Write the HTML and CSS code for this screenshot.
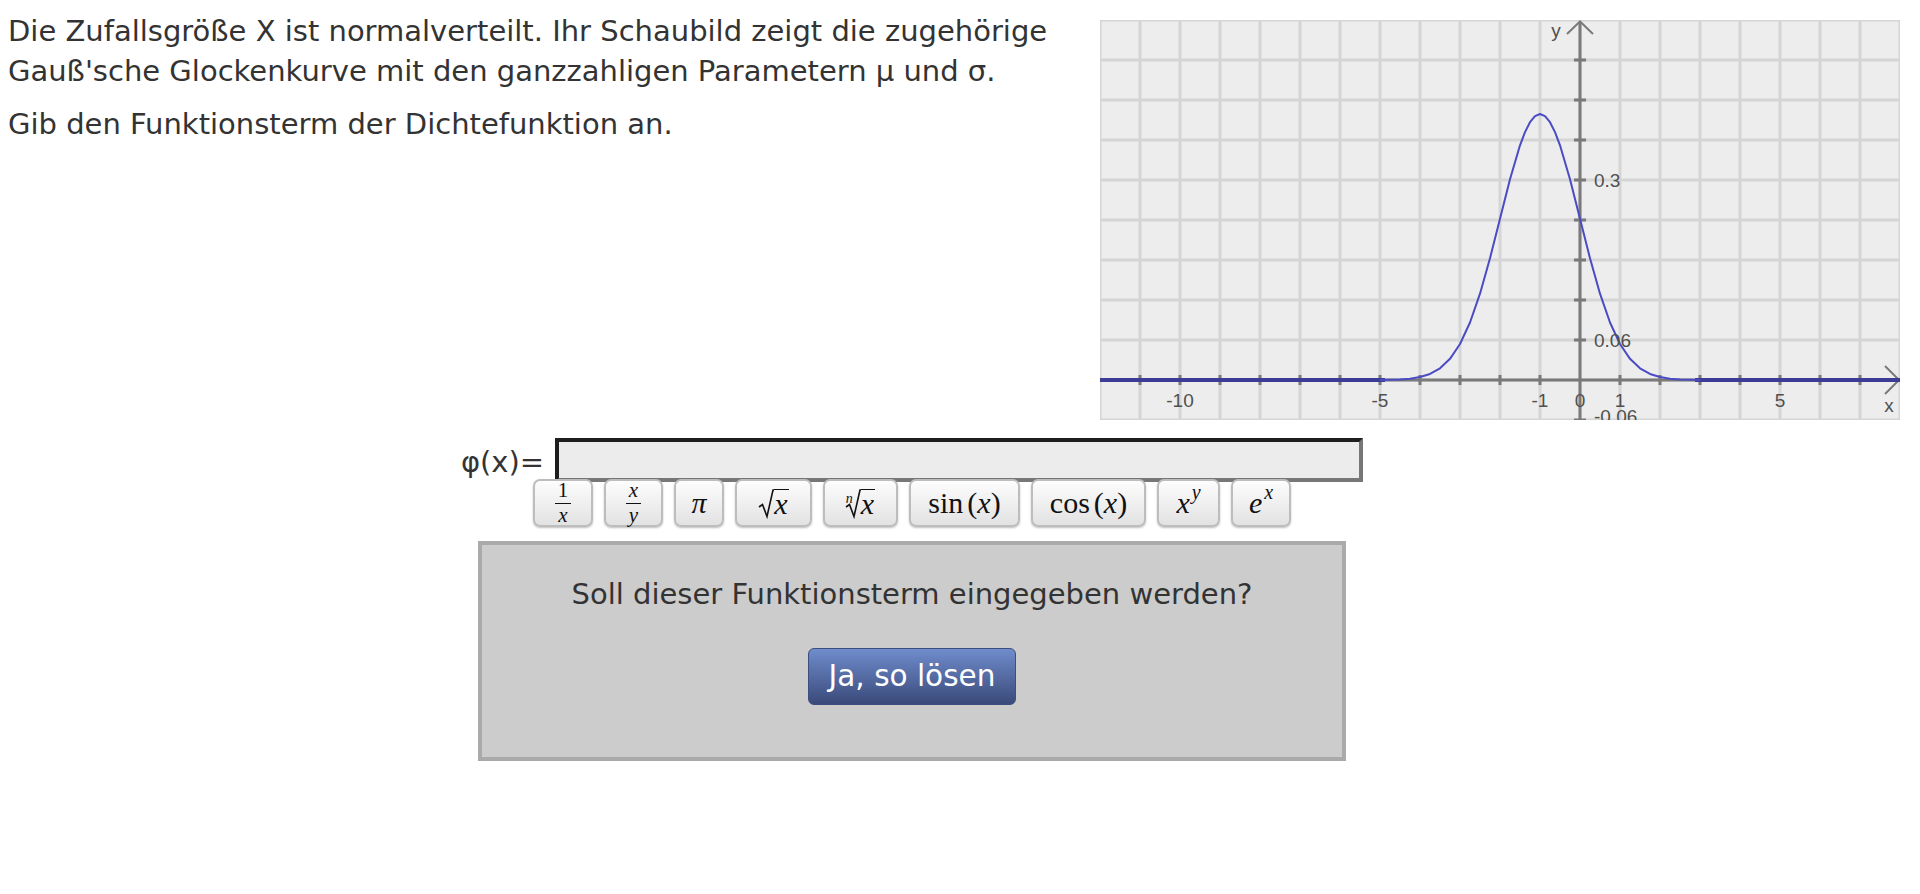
FILE: index.html
```html
<!DOCTYPE html>
<html lang="de">
<head>
<meta charset="utf-8">
<title>Normalverteilung</title>
<link rel="stylesheet" href="styles.css">
</head>
<body>
<div class="top">
  <div class="task">
    <p>Die Zufallsgröße X ist normalverteilt. Ihr Schaubild zeigt die zugehörige Gauß'sche Glockenkurve mit den ganzzahligen Parametern μ und σ.</p>
    <p>Gib den Funktionsterm der Dichtefunktion an.</p>
  </div>
  <div class="plot">
    <svg class="graph" width="800" height="400" viewBox="0 0 800 400">
      <defs>
        <pattern id="grid" x="-20" y="-20" width="40" height="40" patternUnits="userSpaceOnUse">
          <path d="M20 0V40M0 20H40" stroke="#d5d5d5" stroke-width="3" fill="none"/>
        </pattern>
      </defs>
      <rect width="800" height="400" fill="#ededed"/>
      <rect width="800" height="400" fill="url(#grid)"/>
      <path d="M0 360H800" stroke="#7a7a7a" stroke-width="3"/>
      <path d="M480 400V2" stroke="#7a7a7a" stroke-width="3"/>
      <path d="M40 355V365M80 355V365M120 355V365M160 355V365M200 355V365M240 355V365M280 355V365M320 355V365M360 355V365M400 355V365M440 355V365M520 355V365M560 355V365M600 355V365M640 355V365M680 355V365M720 355V365M760 355V365" stroke="#7a7a7a" stroke-width="3"/>
      <path d="M474 40H486M474 80H486M474 120H486M474 160H486M474 200H486M474 240H486M474 280H486M474 320H486M474 400H486" stroke="#7a7a7a" stroke-width="3"/>
      <path d="M467 14L480 1.5L493 14" stroke="#7a7a7a" stroke-width="2" fill="none"/>
      <path d="M785 346L799 360L785 374" stroke="#7a7a7a" stroke-width="2" fill="none"/>
      <path d="M0 360H285M595 360H800" stroke="#3c3c96" stroke-width="4"/>
      <polyline fill="none" stroke="#4b4bc4" stroke-width="2" stroke-linejoin="round" points="280,359.9 290,359.76 300,359.42 310,358.65 320,357.05 330,353.94 340,348.31 350,338.84 360,324.01 370,302.48 380,273.66 390,238.23 400,198.69 410,159.24 420,125.29 425,112.1 430,102.22 435,96.11 440,94.04 445,96.11 450,102.22 455,112.1 460,125.29 470,159.24 480,198.69 490,238.23 500,273.66 510,302.48 520,324.01 530,338.84 540,348.31 550,353.94 560,357.05 570,358.65 580,359.42 590,359.76 600,359.9"/>
      <g class="lbl" text-anchor="middle">
        <text x="80" y="387">-10</text>
        <text x="280" y="387">-5</text>
        <text x="440" y="387">-1</text>
        <text x="480" y="387">0</text>
        <text x="520" y="387">1</text>
        <text x="680" y="387">5</text>
        <text x="789" y="392">x</text>
        <text x="456" y="17">y</text>
      </g>
      <g class="lbl">
        <text x="494" y="167">0.3</text>
        <text x="494" y="327">0.06</text>
        <text x="494" y="403">-0.06</text>
      </g>
    </svg>
  </div>
</div>

<div class="answer">
  <div class="input-row">
    <span class="fx">φ(x)=</span>
    <div class="field"></div>
  </div>
  <div class="keys">
    <button type="button" class="key k-inv"><span class="frac"><span class="num">1</span><span class="den"><i>x</i></span></span></button>
    <button type="button" class="key k-div"><span class="frac"><span class="num"><i>x</i></span><span class="den"><i>y</i></span></span></button>
    <button type="button" class="key k-pi"><i>π</i></button>
    <button type="button" class="key k-sqrt"><span class="sqrt"><svg class="rad" width="16" height="30" viewBox="0 0 16 30"><path d="M1 18L4.5 15.5L9 27.5L15 1H16" fill="none" stroke="#111" stroke-width="1.6"/></svg><span class="rad-body"><i>x</i></span></span></button>
    <button type="button" class="key k-root"><span class="sqrt"><span class="idx"><i>n</i></span><svg class="rad" width="16" height="30" viewBox="0 0 16 30"><path d="M1 18L4.5 15.5L9 27.5L15 1H16" fill="none" stroke="#111" stroke-width="1.6"/></svg><span class="rad-body"><i>x</i></span></span></button>
    <button type="button" class="key k-sin">sin<span class="paren">(<i>x</i>)</span></button>
    <button type="button" class="key k-cos">cos<span class="paren">(<i>x</i>)</span></button>
    <button type="button" class="key k-pow"><i>x</i><span class="sup"><i>y</i></span></button>
    <button type="button" class="key k-exp"><i>e</i><span class="sup"><i>x</i></span></button>
  </div>
  <div class="confirm">
    <p>Soll dieser Funktionsterm eingegeben werden?</p>
    <button type="button" class="solve">Ja, so lösen</button>
  </div>
</div>
</body>
</html>
```

FILE: styles.css
```css
body {
  margin: 8px;
  background: #fff;
  color: #333;
  font-family: "DejaVu Sans", Verdana, sans-serif;
  font-size: 29px;
  line-height: 40px;
}

.top {
  display: flex;
  justify-content: space-between;
  align-items: flex-start;
}

.task {
  width: 1084px;
  padding-top: 3px;
}

.task p {
  margin: 0;
}

.task p + p {
  margin-top: 13px;
}

.plot {
  width: 800px;
  height: 400px;
  margin: 12px 12px 0 0;
}

.graph {
  display: block;
}

.lbl {
  font-family: "Liberation Sans", Arial, sans-serif;
  font-size: 19px;
  fill: #505050;
}

.answer {
  width: 1808px;
  margin-top: 18px;
  display: flex;
  flex-direction: column;
  align-items: center;
}

.input-row {
  display: flex;
  align-items: flex-end;
}

.fx {
  margin-right: 11px;
  line-height: 40px;
}

.field {
  box-sizing: border-box;
  width: 808px;
  height: 44px;
  border-style: solid;
  border-width: 4px;
  border-color: #1e1e1e #777 #777 #1e1e1e;
  background: #ececec;
}

.keys {
  display: flex;
  gap: 11px;
  margin-top: -3px;
}

.key {
  box-sizing: border-box;
  height: 48px;
  padding: 0;
  border: 2px solid #bdbdbd;
  border-radius: 7px;
  background: linear-gradient(#fdfdfd, #e2e2e2);
  box-shadow: 0 1px 2px rgba(0, 0, 0, 0.25);
  display: flex;
  align-items: center;
  justify-content: center;
  font-family: "Liberation Serif", "Times New Roman", serif;
  font-size: 30px;
  line-height: 1;
  color: #111;
}

.key i {
  font-style: italic;
}

.k-inv { width: 60px; }
.k-div { width: 59px; }
.k-pi { width: 50px; }
.k-sqrt { width: 77px; }
.k-root { width: 75px; }
.k-sin { width: 111px; }
.k-cos { width: 115px; }
.k-pow { width: 63px; }
.k-exp { width: 60px; }

.paren {
  margin-left: 4px;
}

.frac {
  display: inline-flex;
  flex-direction: column;
  align-items: center;
  font-size: 21px;
  line-height: 1;
}

.frac .num {
  padding: 0 3px 2px;
  border-bottom: 1.5px solid #111;
}

.frac .den {
  padding-top: 1px;
}

.sqrt {
  display: inline-flex;
  align-items: flex-start;
  margin-top: 2px;
}

.rad {
  display: block;
}

.rad-body {
  border-top: 1.6px solid #111;
  line-height: 28px;
  padding: 0 1px 0 0;
}

.idx {
  font-size: 14px;
  line-height: 1;
  margin: 3px -8px 0 0;
}

.sup {
  display: inline-block;
  font-size: 20px;
  margin-left: 2px;
  transform: translateY(-11px);
}

.confirm {
  box-sizing: border-box;
  width: 868px;
  height: 220px;
  margin-top: 14px;
  padding-top: 29px;
  background: #ccc;
  border: 4px solid #aaa;
  display: flex;
  flex-direction: column;
  align-items: center;
}

.confirm p {
  margin: 0;
}

.solve {
  margin-top: 34px;
  height: 57px;
  padding: 0 20px;
  border: 1px solid #3e4e7e;
  border-radius: 6px;
  background: linear-gradient(#6f8ccc, #3a4a7a);
  color: #fff;
  font-family: inherit;
  font-size: 29.5px;
  line-height: 1;
}
```
